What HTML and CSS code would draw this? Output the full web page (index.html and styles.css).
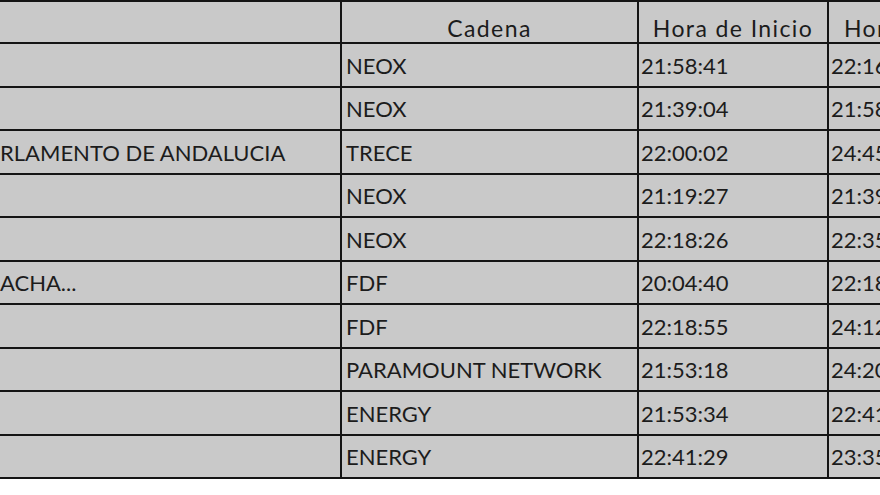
FILE: index.html
```html
<!DOCTYPE html>
<html lang="es">
<head>
<meta charset="utf-8">
<title>Audiencias</title>
<link rel="stylesheet" href="styles.css">
</head>
<body>
<div class="sheet" role="table">
  <div class="row head" role="row">
    <div class="cell c1" role="columnheader"></div>
    <div class="cell c2" role="columnheader">Cadena</div>
    <div class="cell c3" role="columnheader">Hora de Inicio</div>
    <div class="cell c4" role="columnheader">Hora de Fin</div>
  </div>
  <div class="row odd" role="row"><div class="cell c1"></div><div class="cell c2">NEOX</div><div class="cell c3">21:58:41</div><div class="cell c4">22:16:10</div></div>
  <div class="row even" role="row"><div class="cell c1"></div><div class="cell c2">NEOX</div><div class="cell c3">21:39:04</div><div class="cell c4">21:58:40</div></div>
  <div class="row odd" role="row"><div class="cell c1">RLAMENTO DE ANDALUCIA</div><div class="cell c2">TRECE</div><div class="cell c3">22:00:02</div><div class="cell c4">24:45:12</div></div>
  <div class="row even" role="row"><div class="cell c1"></div><div class="cell c2">NEOX</div><div class="cell c3">21:19:27</div><div class="cell c4">21:39:03</div></div>
  <div class="row odd" role="row"><div class="cell c1"></div><div class="cell c2">NEOX</div><div class="cell c3">22:18:26</div><div class="cell c4">22:35:50</div></div>
  <div class="row even" role="row"><div class="cell c1">ACHA...</div><div class="cell c2">FDF</div><div class="cell c3">20:04:40</div><div class="cell c4">22:18:54</div></div>
  <div class="row odd" role="row"><div class="cell c1"></div><div class="cell c2">FDF</div><div class="cell c3">22:18:55</div><div class="cell c4">24:12:30</div></div>
  <div class="row even" role="row"><div class="cell c1"></div><div class="cell c2">PARAMOUNT NETWORK</div><div class="cell c3">21:53:18</div><div class="cell c4">24:20:05</div></div>
  <div class="row odd" role="row"><div class="cell c1"></div><div class="cell c2">ENERGY</div><div class="cell c3">21:53:34</div><div class="cell c4">22:41:28</div></div>
  <div class="row even" role="row"><div class="cell c1"></div><div class="cell c2">ENERGY</div><div class="cell c3">22:41:29</div><div class="cell c4">23:35:40</div></div>
</div>
</body>
</html>
```

FILE: styles.css
```css
html, body {
  margin: 0;
  padding: 0;
  background: #ffffff;
  overflow: hidden;
  width: 880px;
  height: 495px;
}

.sheet {
  display: grid;
  grid-template-columns: 342px 297px 190px 300px;
  width: 1129px;
  border-top: 2px solid #141414;
  background: #c9c9c9;
  font-family: Lato, "Open Sans", "Liberation Sans", sans-serif;
  font-size: 22px;
  color: #1c1c1c;
}

.row {
  display: contents;
}

.cell {
  box-sizing: border-box;
  border-right: 2px solid #141414;
  border-bottom: 2px solid #141414;
  display: flex;
  align-items: flex-end;
  white-space: nowrap;
  overflow: hidden;
  padding: 0 0 9px 4px;
  line-height: 22px;
}

.head .cell {
  height: 42px;
  justify-content: center;
  padding: 0 0 3px 0;
  font-size: 23px;
  letter-spacing: 1.4px;
}

.head .c4 {
  justify-content: flex-start;
  padding-left: 15px;
}

.odd .cell { height: 44px; }
.even .cell { height: 43px; }

.c1 { padding-left: 0; }
.c3, .c4 { padding-left: 2px; }
```
